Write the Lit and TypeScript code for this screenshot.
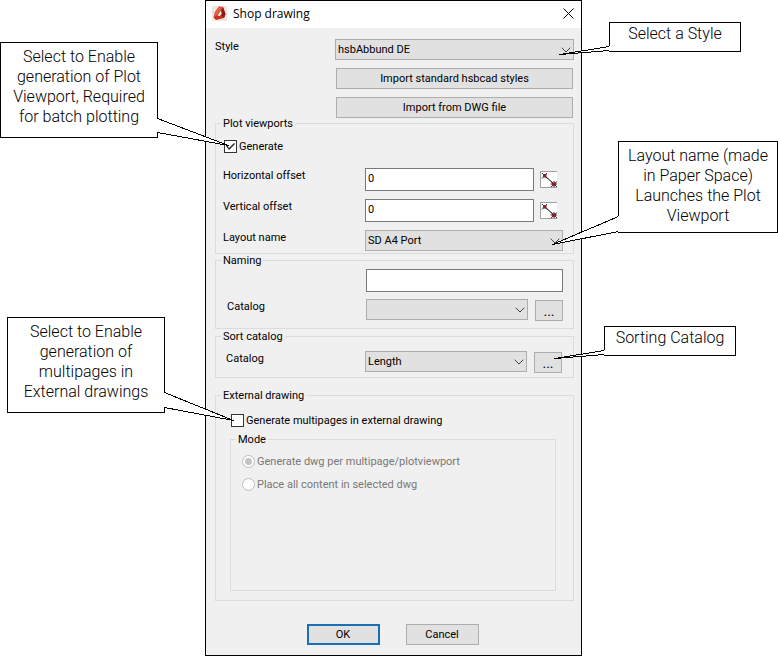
import { LitElement, html, css, svg } from "lit";
import { customElement, property } from "lit/decorators.js";

type Point = [number, number];

/** Boxed note with a wedge-shaped pointer that reaches towards a control. */
@customElement("callout-note")
class CalloutNote extends LitElement {
  @property() side: "left" | "right" = "right";
  /** Wedge corners relative to the edge the pointer leaves from: start, tip, end. */
  @property({ attribute: false }) wedge: Point[] = [];

  static styles = css`
    :host {
      display: block;
      position: relative;
      box-sizing: border-box;
      border: 1px solid #000;
      background: #fff;
      color: #000;
      font: 300 16px/20px Roboto, "Liberation Sans", Arial, sans-serif;
      text-align: center;
      white-space: pre-line;
    }
    svg {
      position: absolute;
      top: -1px;
      width: 1px;
      height: 1px;
      overflow: visible;
      pointer-events: none;
      shape-rendering: crispEdges;
    }
    .right {
      right: -1px;
    }
    .left {
      left: -1px;
    }
    .fill {
      fill: #fff;
      stroke: #fff;
    }
    .edge {
      fill: none;
      stroke: #000;
    }
  `;

  render() {
    const points = this.wedge.map(([x, y]) => `${x + 0.5},${y + 0.5}`).join(" ");
    const [start, , end] = this.wedge;
    return html`<slot></slot>
      <svg class=${this.side} aria-hidden="true">
        ${svg`<polygon class="fill" points=${points}></polygon>
        <line class="fill" x1="0.5" x2="0.5" y1=${start[1]} y2=${end[1]}></line>
        <polyline class="edge" points=${points}></polyline>`}
      </svg>`;
  }
}

/** Drop-down list with a thin chevron. */
const dropdown = (id: string, value: string, label = "") => html`
  <span class="dropdown">
    <select id=${id} aria-label=${label || value}>
      <option>${value}</option>
    </select>
    <svg class="chevron" viewBox="0 0 10 6" aria-hidden="true">
      <path d="M0.7 0.7 L5 5 L9.3 0.7" />
    </svg>
  </span>
`;

const pickPoints = (label: string) => html`
  <button class="pick" type="button" aria-label=${label}>
    <svg viewBox="0 0 16 15" aria-hidden="true">
      <path class="line" d="M4 4 L13 12" />
      <path class="star" d="M1 1 L6 6.5 M6 1 L1 6.5 M10 9.5 L16 15 M16 9.5 L10 15 M13 9 V15 M9.5 12 H16" />
      <path class="dot" d="M2 2 h3.5 v3.5 h-3.5z M11 10.5 h4 v3.5 h-4z" />
    </svg>
  </button>
`;

@customElement("app-root")
class AppRoot extends LitElement {
  static styles = css`
    :host {
      display: block;
      background: #fff;
      color: #000;
      font: 11px/14px Roboto, Tahoma, sans-serif;
    }
    * {
      box-sizing: border-box;
    }
    .page {
      display: grid;
      grid-template-columns: 205px minmax(377px, 1fr) 196px;
      align-items: start;
    }
    .notes {
      display: flex;
      flex-direction: column;
      position: relative;
      z-index: 1;
    }
    .note-generate {
      width: 158px;
      margin-top: 42px;
      padding: 4px 8px 10px;
    }
    .note-multipage {
      width: 158px;
      margin: 179px 0 0 7px;
      padding: 4px 8px 10px;
    }
    .note-style {
      width: 132px;
      margin: 22px 0 0 27px;
      padding: 1px 4px 7px;
    }
    .note-layout {
      width: 160px;
      margin: 89px 0 0 36px;
      padding: 4px 6px 6px;
    }
    .note-sort {
      width: 132px;
      margin: 93px 0 0 22px;
      padding: 1px 4px 7px;
    }

    .dialog {
      display: flex;
      flex-direction: column;
      border: 1px solid #000;
      background: #f0f0f0;
    }
    .titlebar {
      display: flex;
      align-items: center;
      height: 27px;
      padding: 0 7px 2px 6px;
      background: #fff;
    }
    .logo {
      width: 15px;
      height: 15px;
    }
    h1 {
      flex: 1;
      margin: 0 0 0 6px;
      font: 12px/16px "Open Sans", "Segoe UI", sans-serif;
    }
    .close {
      width: 11px;
      height: 11px;
      padding: 0;
      border: 0;
      background: none;
    }
    .close svg {
      display: block;
      width: 11px;
      height: 11px;
      stroke: #000;
    }

    form {
      padding: 11px 7px 10px 9px;
    }
    .row {
      display: flex;
      align-items: flex-start;
    }
    .row > label {
      flex: none;
      line-height: 16px;
    }
    .style-row > label {
      width: 120px;
    }
    .imports {
      display: grid;
      gap: 8px;
      margin: 8px 1px 0 121px;
    }
    button,
    select,
    input {
      margin: 0;
      color: #000;
      font: inherit;
    }
    .push {
      height: 21px;
      padding: 0;
      border: 1px solid #adadad;
      background: #e1e1e1;
    }
    .dropdown {
      display: flex;
      flex: 1;
      min-width: 0;
      position: relative;
    }
    select {
      appearance: none;
      width: 100%;
      height: 21px;
      padding: 1px 20px 0 2px;
      border: 1px solid #adadad;
      border-radius: 0;
      background: #e1e1e1;
    }
    .chevron {
      position: absolute;
      top: 8px;
      right: 3px;
      width: 10px;
      height: 6px;
      fill: none;
      stroke: #444;
      pointer-events: none;
    }
    .text {
      flex: 1;
      min-width: 0;
      height: 23px;
      padding: 0 2px 3px;
      border: 1px solid #7a7a7a;
      background: #fff;
    }
    fieldset {
      --inset: 7px;
      min-width: 0;
      margin: 0;
      padding: 0;
      border: 1px solid #dcdcdc;
    }
    legend {
      margin-left: calc(5px - var(--inset));
      padding: 0 2px;
      line-height: 11px;
    }

    .plot {
      padding: 11px 10px 2px var(--inset);
    }
    .plot .row {
      margin-bottom: 8px;
    }
    .plot .row:last-child {
      margin-bottom: 0;
    }
    .plot .row > label {
      width: 142px;
    }
    .plot .check {
      margin: 0 0 15px 1px;
    }
    .plot .offset {
      padding-right: 6px;
    }
    .pick {
      width: 17px;
      height: 17px;
      margin: 3px 0 0 6px;
      padding: 0;
      border: solid #a0a0a0;
      border-width: 1px 0 1px 1px;
      background: #fff;
    }
    .pick svg {
      display: block;
      width: 16px;
      height: 15px;
      fill: none;
    }
    .pick .line {
      stroke: #000;
    }
    .pick .star {
      stroke: #222;
      stroke-width: 0.9;
    }
    .pick .dot {
      fill: #8c2030;
    }

    .naming {
      --inset: 11px;
      margin-top: 1px;
      padding: 3px 10px 7px var(--inset);
    }
    .naming .text {
      display: block;
      width: calc(100% - 139px);
      margin: 0 0 7px 139px;
    }
    .sort {
      --inset: 10px;
      margin-top: 2px;
      padding: 9px 11px 4px var(--inset);
    }
    .catalog > label {
      width: 139px;
    }
    .more {
      width: 28px;
      margin: 1px 0 0 7px;
      font-size: 14px;
      line-height: 14px;
    }

    .external {
      --inset: 14px;
      margin-top: 12px;
      padding: 13px 17px 9px var(--inset);
    }
    .check,
    .radio {
      display: flex;
      align-items: center;
      gap: 2px;
      height: 13px;
    }
    .external > .check {
      margin: 0 0 7px 1px;
    }
    input[type="checkbox"],
    input[type="radio"] {
      appearance: none;
      display: grid;
      flex: none;
      place-items: center;
      width: 13px;
      height: 13px;
      border: 1px solid #333;
      background: #fff;
    }
    input[type="checkbox"]:checked::before {
      content: "";
      width: 11px;
      height: 11px;
      background: #222;
      clip-path: polygon(1px 5px, 2px 4px, 4px 7px, 9px 2px, 10px 3px, 4px 9px);
    }
    input[type="radio"] {
      border-color: #bcbcbc;
      border-radius: 50%;
    }
    input[type="radio"]:checked::before {
      content: "";
      width: 7px;
      height: 7px;
      border-radius: 50%;
      background: #c4c4c4;
    }
    .mode {
      --inset: 11px;
      min-height: 157px;
      padding: 10px 11px 0 var(--inset);
    }
    .radio {
      margin-bottom: 10px;
      color: #787878;
    }

    .actions {
      display: flex;
      justify-content: center;
      gap: 26px;
      margin-top: 23px;
      padding-right: 4px;
    }
    .actions .push {
      width: 73px;
    }
    .actions .default {
      border: 2px solid #1a70b4;
    }
  `;

  render() {
    return html`
      <main class="page">
        <div class="notes">
          <callout-note class="note-generate" .wedge=${[[0, 76], [71, 103], [0, 90]]}
            >Select to Enable generation of Plot Viewport, Required for batch plotting</callout-note
          >
          <callout-note class="note-multipage" .wedge=${[[0, 75], [69, 103], [0, 90]]}
            >Select to Enable generation of multipages in External drawings</callout-note
          >
        </div>

        <section class="dialog" role="dialog" aria-labelledby="title">
          <header class="titlebar">
            <svg class="logo" viewBox="0 0 15 15" aria-hidden="true">
              <rect width="15" height="15" fill="#f1e4e1" />
              <path fill="#c8321f" d="M7 0.5 L11 1 L13.5 8 L12 12 L4 14 L1.5 11.5 L3 6z" />
              <path fill="#e2604a" d="M7 0.5 L11 1 L8 5 L4.5 9.5 L2 11 L3 6z" />
              <path fill="#8e1c12" d="M11 1 L13.5 8 L12 12 L9.5 9 L9.5 4z" />
              <path fill="#f7e9e6" d="M9 4.4 L9.6 8 L7.6 10 L5.4 9.6z" />
            </svg>
            <h1 id="title">Shop drawing</h1>
            <button class="close" aria-label="Close">
              <svg viewBox="0 0 11 11"><path d="M0.5 0.5 L10.5 10.5 M10.5 0.5 L0.5 10.5" /></svg>
            </button>
          </header>

          <form @submit=${(e: Event) => e.preventDefault()}>
            <div class="row style-row">
              <label for="style">Style</label>
              ${dropdown("style", "hsbAbbund DE", "Style")}
            </div>
            <div class="imports">
              <button class="push" type="button">Import standard hsbcad styles</button>
              <button class="push" type="button">Import from DWG file</button>
            </div>

            <fieldset class="plot">
              <legend>Plot viewports</legend>
              <label class="check"><input type="checkbox" checked />Generate</label>
              <div class="row offset">
                <label for="horizontal">Horizontal offset</label>
                <input class="text" id="horizontal" value="0" />
                ${pickPoints("Pick horizontal offset")}
              </div>
              <div class="row offset">
                <label for="vertical">Vertical offset</label>
                <input class="text" id="vertical" value="0" />
                ${pickPoints("Pick vertical offset")}
              </div>
              <div class="row">
                <label for="layout">Layout name</label>
                ${dropdown("layout", "SD A4 Port", "Layout name")}
              </div>
            </fieldset>

            <fieldset class="naming">
              <legend>Naming</legend>
              <input class="text" aria-label="Naming" />
              <div class="row catalog">
                <label for="naming-catalog">Catalog</label>
                ${dropdown("naming-catalog", "", "Catalog")}
                <button class="push more" type="button">...</button>
              </div>
            </fieldset>

            <fieldset class="sort">
              <legend>Sort catalog</legend>
              <div class="row catalog">
                <label for="sort-catalog">Catalog</label>
                ${dropdown("sort-catalog", "Length", "Catalog")}
                <button class="push more" type="button">...</button>
              </div>
            </fieldset>

            <fieldset class="external">
              <legend>External drawing</legend>
              <label class="check"><input type="checkbox" />Generate multipages in external drawing</label>
              <fieldset class="mode" disabled>
                <legend>Mode</legend>
                <label class="radio"
                  ><input type="radio" name="mode" checked />Generate dwg per multipage/plotviewport</label
                >
                <label class="radio"><input type="radio" name="mode" />Place all content in selected dwg</label>
              </fieldset>
            </fieldset>

            <div class="actions">
              <button class="push default">OK</button>
              <button class="push" type="button">Cancel</button>
            </div>
          </form>
        </section>

        <div class="notes">
          <callout-note class="note-style" side="left" .wedge=${[[0, 24], [-50, 32], [0, 28]]}
            >Select a Style</callout-note
          >
          <callout-note class="note-layout" side="left" .wedge=${[[0, 75], [-66, 103], [0, 90]]}
            >Layout name (made in Paper Space) Launches the Plot Viewport</callout-note
          >
          <callout-note class="note-sort" side="left" .wedge=${[[0, 24], [-50, 32], [0, 28]]}
            >Sorting Catalog</callout-note
          >
        </div>
      </main>
    `;
  }
}
